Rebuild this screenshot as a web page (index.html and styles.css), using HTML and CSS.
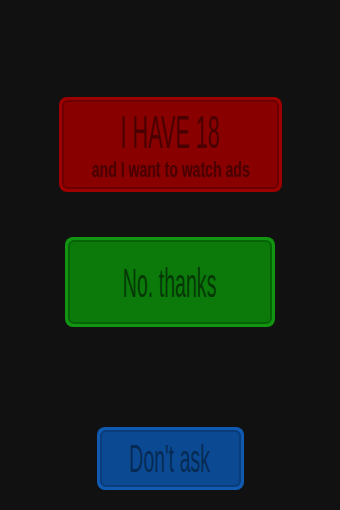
FILE: index.html
```html
<!DOCTYPE html>
<html>
<head>
<meta charset="utf-8">
<link rel="stylesheet" href="styles.css">
</head>
<body>
<main class="screen">
  <button class="btn btn-red">
    <span class="inner">
      <span class="txt title">I HAVE 18</span>
      <span class="txt sub">and I want to watch ads</span>
    </span>
  </button>
  <button class="btn btn-green">
    <span class="inner">
      <span class="txt label-lg">No. thanks</span>
    </span>
  </button>
  <button class="btn btn-blue">
    <span class="inner">
      <span class="txt label-md">Don't ask</span>
    </span>
  </button>
</main>
</body>
</html>
```
FILE: styles.css
```css
html, body {
  margin: 0;
  padding: 0;
  background: #111111;
}
.screen {
  width: 340px;
  height: 510px;
  display: flex;
  flex-direction: column;
  align-items: center;
  padding-top: 97px;
  box-sizing: border-box;
  font-family: "Liberation Sans", Arial, sans-serif;
}
.btn {
  display: flex;
  box-sizing: border-box;
  padding: 3px;
  border: none;
  border-radius: 8px;
  margin: 0;
  font: inherit;
  cursor: pointer;
}
.inner {
  flex: 1 1 0;
  min-width: 0;
  width: 0;
  display: flex;
  flex-direction: column;
  align-items: center;
  justify-content: center;
  border-radius: 6px;
  border: 2px solid;
}
.txt {
  display: inline-block;
  white-space: nowrap;
  transform-origin: center;
}
.btn-red {
  width: 223px;
  height: 95px;
  background: #9c0000;
}
.btn-red .inner {
  background: #880000;
  border-color: #6c0000;
  color: #4a0000;
}
.title {
  font-size: 47px;
  line-height: 44px;
  transform: scaleX(0.46);
  margin-top: 2px;
}
.sub {
  font-size: 22px;
  line-height: 22px;
  font-weight: bold;
  transform: scaleX(0.64);
  margin-top: 5px;
}
.btn-green {
  width: 210px;
  height: 90px;
  margin-top: 45px;
  background: #129612;
}
.btn-green .inner {
  background: #0b7a0b;
  border-color: #066406;
  color: #063806;
}
.label-lg {
  font-size: 40px;
  line-height: 40px;
  transform: scaleX(0.49);
  margin-top: 2px;
}
.btn-blue {
  width: 147px;
  height: 63px;
  margin-top: 100px;
  background: #115ab2;
}
.btn-blue .inner {
  background: #0b4a92;
  border-color: #093c78;
  color: #072a55;
}
.label-md {
  font-size: 39px;
  line-height: 40px;
  transform: scaleX(0.5);
}
```
